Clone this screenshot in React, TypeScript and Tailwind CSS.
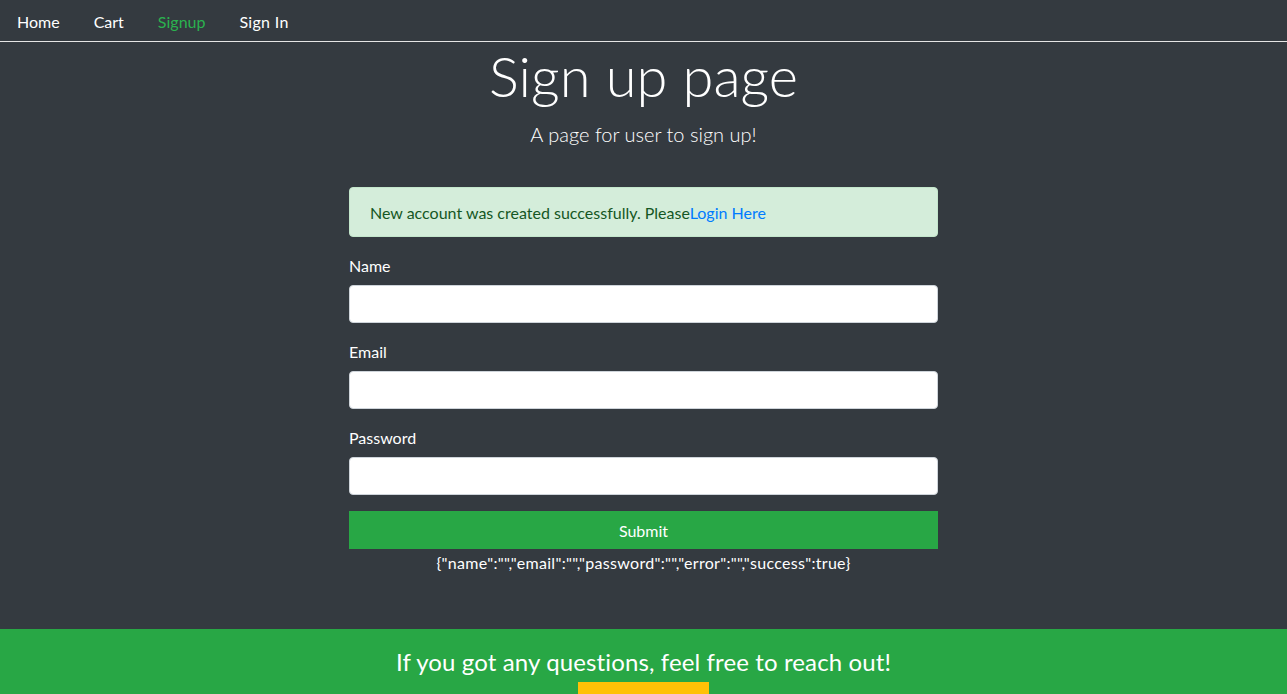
export default function App() {
  const font = { fontFamily: '"Lato", "Noto Sans", sans-serif' };
  return (
    <div className="min-h-[694px] bg-[#343a40] text-white flex flex-col" style={font}>
      <nav className="flex h-[42px] items-center border-b border-[#e5e5e5] px-[17px] pt-[2px] text-[16px]">
        <a className="mr-[34px] text-white">Home</a>
        <a className="mr-[34px] text-white">Cart</a>
        <a className="mr-[34px] text-[#2bb24f]">Signup</a>
        <a className="tracking-[0.3px] text-white">Sign In</a>
      </nav>

      <div className="flex flex-col items-center">
        <h1 className="text-[56px] font-light leading-[67px]">Sign up page</h1>
        <p className="mt-[10px] text-[20px] font-light leading-[30px]">A page for user to sign up!</p>
      </div>

      <form className="mx-auto mt-[38px] w-[589px]" onSubmit={(e) => e.preventDefault()}>
        <div className="mb-4 rounded border border-[#c3e6cb] bg-[#d4edda] px-5 pb-[11px] pt-[13px] text-[16px] leading-6 text-[#155724]">
          New account was created successfully. Please<a className="text-[#007bff]">Login Here</a>
        </div>

        <div className="mb-4">
          <label className="mb-2 block pt-[1px] text-[16px] leading-[23px]">Name</label>
          <input className="block h-[38px] w-full rounded border border-[#ced4da] bg-white px-3 text-[#495057]" />
        </div>
        <div className="mb-4">
          <label className="mb-2 block pt-[1px] text-[16px] leading-[23px]">Email</label>
          <input className="block h-[38px] w-full rounded border border-[#ced4da] bg-white px-3 text-[#495057]" />
        </div>
        <div className="mb-4">
          <label className="mb-2 block pt-[1px] text-[16px] leading-[23px]">Password</label>
          <input
            type="password"
            className="block h-[38px] w-full rounded border border-[#ced4da] bg-white px-3 text-[#495057]"
          />
        </div>

        <button type="submit" className="block h-[38px] w-full bg-[#28a745] pt-[2px] text-[16px] text-white">
          Submit
        </button>
        <p className="mt-[2px] text-center text-[16px] leading-6 tracking-[0.3px]">
          {'{"name":"","email":"","password":"","error":"","success":true}'}
        </p>
      </form>

      <footer className="mt-[54px] flex flex-1 flex-col items-center bg-[#28a745] pt-[17px]">
        <p className="text-[24px] leading-[32px] tracking-[0.12px]">If you got any questions, feel free to reach out!</p>
        <div className="mt-[4px] h-[20px] w-[131px] bg-[#ffc107]" />
      </footer>
    </div>
  );
}
